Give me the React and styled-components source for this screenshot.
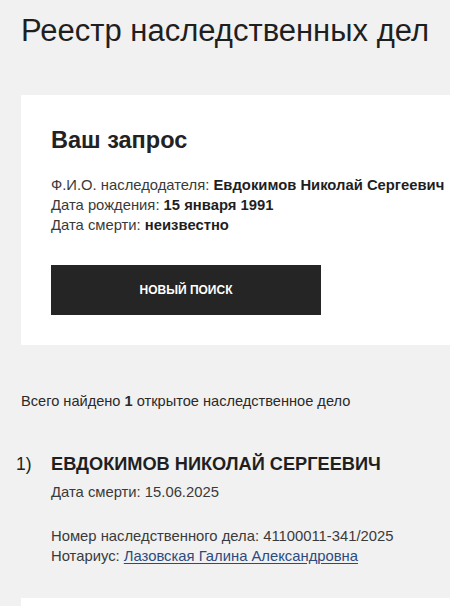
import React from "react";
import styled, { createGlobalStyle } from "styled-components";

const GlobalStyle = createGlobalStyle`
  html, body {
    margin: 0;
    padding: 0;
    background: #f1f1f1;
    overflow: hidden;
  }
  body {
    font-family: "Liberation Sans", Arial, sans-serif;
    color: #222;
  }
`;

const Page = styled.main`
  padding: 13px 0 0 21px;
`;

const Title = styled.h1`
  margin: 0 0 46px;
  font-size: 31px;
  line-height: 36px;
  font-weight: 400;
  color: #1f1f1f;
  white-space: nowrap;
`;

const Card = styled.section`
  background: #fff;
  padding: 32px 30px 30px;
`;

const CardTitle = styled.h2`
  margin: 0 0 22px;
  font-size: 23.5px;
  line-height: 26px;
  font-weight: 700;
  color: #222;
`;

const InfoLine = styled.div`
  font-size: 14.8px;
  line-height: 20px;
  color: #3a3a3a;
  white-space: nowrap;

  b {
    color: #1f1f1f;
    font-weight: 700;
  }
`;

const Button = styled.button`
  display: flex;
  align-items: center;
  justify-content: center;
  width: 270px;
  height: 50px;
  margin-top: 30px;
  border: 0;
  background: #252525;
  color: #fff;
  font-family: inherit;
  font-size: 12px;
  font-weight: 700;
  text-transform: uppercase;
  cursor: pointer;
`;

const Summary = styled.p`
  margin: 46px 0 41px;
  font-size: 14.6px;
  line-height: 20px;
  color: #2a2a2a;

  b {
    font-weight: 700;
  }
`;

const Result = styled.article`
  display: grid;
  grid-template-columns: 35px 1fr;
  margin-left: -5px;
`;

const Number = styled.span`
  font-size: 17.5px;
  line-height: 24px;
  color: #222;
`;

const Body = styled.div`
  display: flex;
  flex-direction: column;
`;

const Name = styled.h3`
  margin: 0 0 6px;
  font-size: 18.2px;
  line-height: 24px;
  font-weight: 700;
  color: #1f1f1f;
  text-transform: uppercase;
  white-space: nowrap;
`;

const Group = styled.div`
  margin-top: ${(p) => p.$gap || 0}px;
`;

const Link = styled.a`
  color: #2d4a7e;
  text-decoration: underline;
  text-underline-offset: 2px;
`;

const NextCard = styled.div`
  margin-top: 32px;
  height: 40px;
  background: #fff;
`;

export default function App() {
  return (
    <>
      <GlobalStyle />
      <Page>
        <Title>Реестр наследственных дел</Title>
        <Card>
          <CardTitle>Ваш запрос</CardTitle>
          <InfoLine>
            Ф.И.О. наследодателя: <b>Евдокимов Николай Сергеевич</b>
          </InfoLine>
          <InfoLine>
            Дата рождения: <b>15 января 1991</b>
          </InfoLine>
          <InfoLine>
            Дата смерти: <b>неизвестно</b>
          </InfoLine>
          <Button>Новый поиск</Button>
        </Card>
        <Summary>
          Всего найдено <b>1</b> открытое наследственное дело
        </Summary>
        <Result>
          <Number>1)</Number>
          <Body>
            <Name>Евдокимов Николай Сергеевич</Name>
            <InfoLine>Дата смерти: 15.06.2025</InfoLine>
            <Group $gap={24}>
              <InfoLine>Номер наследственного дела: 41100011-341/2025</InfoLine>
              <InfoLine>
                Нотариус: <Link href="#">Лазовская Галина Александровна</Link>
              </InfoLine>
            </Group>
          </Body>
        </Result>
        <NextCard />
      </Page>
    </>
  );
}
